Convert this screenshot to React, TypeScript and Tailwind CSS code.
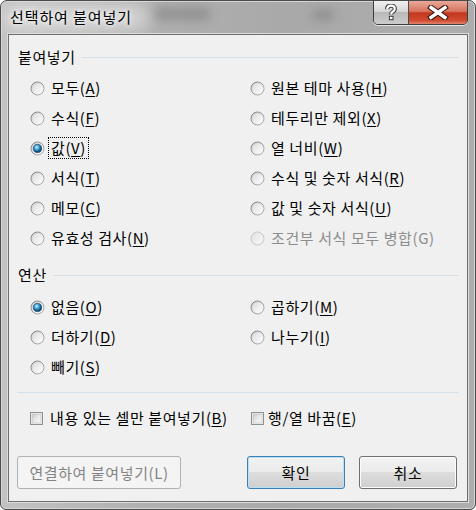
import React from 'react';

const FONT = "font-['Malgun_Gothic','Noto_Sans_CJK_KR',sans-serif]";

function Defs() {
  return (
    <svg width="0" height="0" className="absolute">
      <defs>
        <linearGradient id="rbStroke" x1="0" y1="0" x2="1" y2="1">
          <stop offset="0" stopColor="#7e7e7e" />
          <stop offset="1" stopColor="#b4b4b4" />
        </linearGradient>
        <linearGradient id="rbFill" x1="0" y1="0" x2="1" y2="1">
          <stop offset="0" stopColor="#c8c8c8" />
          <stop offset="0.55" stopColor="#ececec" />
          <stop offset="1" stopColor="#ffffff" />
        </linearGradient>
        <linearGradient id="rbInner" x1="0" y1="0" x2="1" y2="1">
          <stop offset="0" stopColor="#dedede" />
          <stop offset="1" stopColor="#fbfbfb" />
        </linearGradient>
        <linearGradient id="rbFillDis" x1="0" y1="0" x2="1" y2="1">
          <stop offset="0" stopColor="#e2e2e2" />
          <stop offset="1" stopColor="#f8f8f8" />
        </linearGradient>
        <radialGradient id="rbDot" cx="0.4" cy="0.35" r="0.7">
          <stop offset="0" stopColor="#e0f6ff" />
          <stop offset="0.3" stopColor="#5ab8ea" />
          <stop offset="0.75" stopColor="#12568c" />
          <stop offset="1" stopColor="#0c3a63" />
        </radialGradient>
        <linearGradient id="cbFill" x1="0" y1="0" x2="1" y2="1">
          <stop offset="0" stopColor="#c9c9c9" />
          <stop offset="0.55" stopColor="#ebebeb" />
          <stop offset="1" stopColor="#fbfbfb" />
        </linearGradient>
      </defs>
    </svg>
  );
}

function Radio({ checked, disabled }: { checked?: boolean; disabled?: boolean }) {
  return (
    <svg width="15" height="15" viewBox="0 0 15 15" className="flex-shrink-0">
      <circle
        cx="7.5"
        cy="7.5"
        r="6.5"
        fill={disabled ? 'url(#rbFillDis)' : 'url(#rbFill)'}
        stroke={disabled ? '#c6c6c6' : 'url(#rbStroke)'}
        strokeWidth="1"
      />
      {!disabled && <circle cx="7.5" cy="7.5" r="4.6" fill="url(#rbInner)" />}
      {checked && <circle cx="7.5" cy="7.5" r="4.1" fill="url(#rbDot)" stroke="#163f66" strokeWidth="0.7" />}
    </svg>
  );
}

function Check() {
  return (
    <svg width="15" height="15" viewBox="0 0 15 15" className="flex-shrink-0">
      <rect x="1.5" y="1.5" width="12" height="12" fill="#f6f6f6" stroke="#8e8f8f" strokeWidth="1" />
      <rect x="3" y="3" width="9" height="9" fill="url(#cbFill)" stroke="#b8b8b8" strokeWidth="0.6" />
    </svg>
  );
}

function Label({ text, k, disabled }: { text: string; k: string; disabled?: boolean }) {
  return (
    <span className={disabled ? 'text-[#8d8d8d]' : 'text-black'}>
      {text}(
      {disabled ? k : <span className="underline decoration-1 underline-offset-[2px]">{k}</span>})
    </span>
  );
}

type Opt = { text: string; k: string; checked?: boolean; disabled?: boolean; focus?: boolean };

function RadioRow({ o }: { o: Opt }) {
  return (
    <div className="flex h-[30px] items-center gap-[6px]">
      <Radio checked={o.checked} disabled={o.disabled} />
      {o.focus ? (
        <span className="ml-[-3px] border border-dotted border-black px-[2px] py-[1px] leading-[18px]">
          <Label text={o.text} k={o.k} disabled={o.disabled} />
        </span>
      ) : (
        <Label text={o.text} k={o.k} disabled={o.disabled} />
      )}
    </div>
  );
}

function GroupHeader({ title }: { title: string }) {
  return (
    <div className="flex h-[20px] items-center pl-[9px] pr-[8px]">
      <span className="text-black">{title}</span>
      <div className="ml-[6px] h-px flex-1 bg-[#d5dfe5]" />
    </div>
  );
}

function Btn({ children, kind }: { children: React.ReactNode; kind?: 'default' | 'disabled' }) {
  const base = 'h-[33px] rounded-[3px] border text-center leading-[31px] ';
  if (kind === 'disabled') {
    return (
      <div className={base + 'w-[164px] border-[#adb2b5] bg-[#f4f4f4] text-[#838383]'}>{children}</div>
    );
  }
  if (kind === 'default') {
    return (
      <div
        className={
          base +
          'w-[98px] border-[#3c7fb1] bg-[linear-gradient(#f2f2f2_0%,#ebebeb_50%,#dddddd_50%,#cfcfcf_100%)] text-black shadow-[inset_0_0_0_1px_#b6e2f7]'
        }
      >
        {children}
      </div>
    );
  }
  return (
    <div
      className={
        base +
        'w-[98px] border-[#707070] bg-[linear-gradient(#f2f2f2_0%,#ebebeb_50%,#dddddd_50%,#cfcfcf_100%)] text-black shadow-[inset_0_0_0_1px_#fbfbfb]'
      }
    >
      {children}
    </div>
  );
}

const pasteLeft: Opt[] = [
  { text: '모두', k: 'A' },
  { text: '수식', k: 'F' },
  { text: '값', k: 'V', checked: true, focus: true },
  { text: '서식', k: 'T' },
  { text: '메모', k: 'C' },
  { text: '유효성 검사', k: 'N' },
];
const pasteRight: Opt[] = [
  { text: '원본 테마 사용', k: 'H' },
  { text: '테두리만 제외', k: 'X' },
  { text: '열 너비', k: 'W' },
  { text: '수식 및 숫자 서식', k: 'R' },
  { text: '값 및 숫자 서식', k: 'U' },
  { text: '조건부 서식 모두 병합', k: 'G', disabled: true },
];
const opLeft: Opt[] = [
  { text: '없음', k: 'O', checked: true },
  { text: '더하기', k: 'D' },
  { text: '빼기', k: 'S' },
];
const opRight: Opt[] = [
  { text: '곱하기', k: 'M' },
  { text: '나누기', k: 'I' },
];

function TitleButtons() {
  return (
    <div className="mt-[-1px] flex h-[25px] overflow-hidden rounded-b-[5px] border border-[#3d3d3d] shadow-[0_1px_0_#e6e6e6]">
      <div className="flex w-[35px] items-center justify-center border-r border-[#4a4a4a] bg-[linear-gradient(#f0f0f0,#d6d6d6_45%,#b8b8b8_50%,#cccccc)]">
        <svg width="14" height="17" viewBox="0 0 14 17">
          <path
            d="M3.2 5.2 C3.2 2.6 5 1.6 7 1.6 C9.2 1.6 10.8 2.8 10.8 4.8 C10.8 6.6 9.6 7.3 8.4 8 C7.5 8.5 7.2 9 7.2 10.4"
            fill="none"
            stroke="#3b3b3b"
            strokeWidth="4.2"
          />
          <path
            d="M3.2 5.2 C3.2 2.6 5 1.6 7 1.6 C9.2 1.6 10.8 2.8 10.8 4.8 C10.8 6.6 9.6 7.3 8.4 8 C7.5 8.5 7.2 9 7.2 10.4"
            fill="none"
            stroke="#ffffff"
            strokeWidth="2.2"
          />
          <rect x="4.9" y="11.8" width="4.6" height="4.4" fill="#3b3b3b" />
          <rect x="5.9" y="12.8" width="2.6" height="2.4" fill="#ffffff" />
        </svg>
      </div>
      <div className="flex w-[58px] items-center justify-center bg-[linear-gradient(#e9a999,#d7735e_45%,#c4361f_52%,#d04c30_85%,#e2846e)]">
        <svg width="24" height="15" viewBox="0 0 24 15">
          <path d="M5 2.5 L19 12.5 M19 2.5 L5 12.5" stroke="#3a1a14" strokeWidth="5.6" strokeLinecap="square" />
          <path d="M5 2.5 L19 12.5 M19 2.5 L5 12.5" stroke="#ffffff" strokeWidth="3.4" strokeLinecap="square" />
        </svg>
      </div>
    </div>
  );
}

export default function App() {
  return (
    <div className={'h-[510px] w-[476px] ' + FONT}>
      <Defs />
      <div className="relative flex h-[510px] w-[476px] flex-col overflow-hidden rounded-t-[7px] rounded-b-[6px] border border-[#4b4b4b] bg-[linear-gradient(90deg,#c2c2c2,#b0b0b0_30%,#a9a9a9_60%,#adadad)] shadow-[inset_0_0_0_1px_#d6d6d6]">
        {/* blurred glass backdrop */}
        <div className="pointer-events-none absolute left-[150px] top-[6px] h-[14px] w-[60px] rounded-full bg-[#7d7d7d] opacity-50 blur-[5px]" />
        <div className="pointer-events-none absolute left-[310px] top-[8px] h-[12px] w-[24px] rounded-full bg-[#7d7d7d] opacity-50 blur-[5px]" />
        <div className="pointer-events-none absolute left-[0px] top-[2px] h-[30px] w-[150px] rounded-full bg-[#e4e4e4] opacity-60 blur-[8px]" />

        <div className="relative flex h-[33px] items-start justify-between pr-[7px]">
          <span className="pl-[9px] pt-[5px] text-[15px] leading-[22px] tracking-[0.9px] text-black [text-shadow:0_0_8px_#ffffff,0_0_4px_#ffffff]">
            선택하여 붙여넣기
          </span>
          <TitleButtons />
        </div>

        <div className="relative mx-[7px] flex h-[468px] flex-col border border-[#6e6e6e] bg-[#f0f0f0] text-[15px] leading-[20px] tracking-[0.6px] shadow-[0_0_0_1px_#dcdcdc]">
          <div className="mt-[12px]">
            <GroupHeader title="붙여넣기" />
          </div>
          <div className="mt-[6px] grid grid-cols-[220px_1fr] pl-[21px]">
            <div className="flex flex-col">
              {pasteLeft.map((o) => (
                <RadioRow key={o.k} o={o} />
              ))}
            </div>
            <div className="flex flex-col">
              {pasteRight.map((o) => (
                <RadioRow key={o.k} o={o} />
              ))}
            </div>
          </div>

          <div className="mt-[12px]">
            <GroupHeader title="연산" />
          </div>
          <div className="mt-[7px] grid grid-cols-[220px_1fr] pl-[21px]">
            <div className="flex flex-col">
              {opLeft.map((o) => (
                <RadioRow key={o.k} o={o} />
              ))}
            </div>
            <div className="flex flex-col">
              {opRight.map((o) => (
                <RadioRow key={o.k} o={o} />
              ))}
            </div>
          </div>

          <div className="mx-[8px] mt-[10px] h-px bg-[#d5dfe5]" />

          <div className="mt-[10px] grid h-[30px] grid-cols-[220px_1fr] items-center pl-[20px]">
            <div className="flex items-center gap-[6px]">
              <Check />
              <Label text="내용 있는 셀만 붙여넣기" k="B" />
            </div>
            <div className="flex items-center gap-[3px] pl-[1px]">
              <Check />
              <Label text="행/열 바꿈" k="E" />
            </div>
          </div>

          <div className="mt-[23px] flex items-center pl-[8px]">
            <Btn kind="disabled">연결하여 붙여넣기(L)</Btn>
            <div className="ml-[66px] flex gap-[14px]">
              <Btn kind="default">확인</Btn>
              <Btn>취소</Btn>
            </div>
          </div>
        </div>
      </div>
    </div>
  );
}
